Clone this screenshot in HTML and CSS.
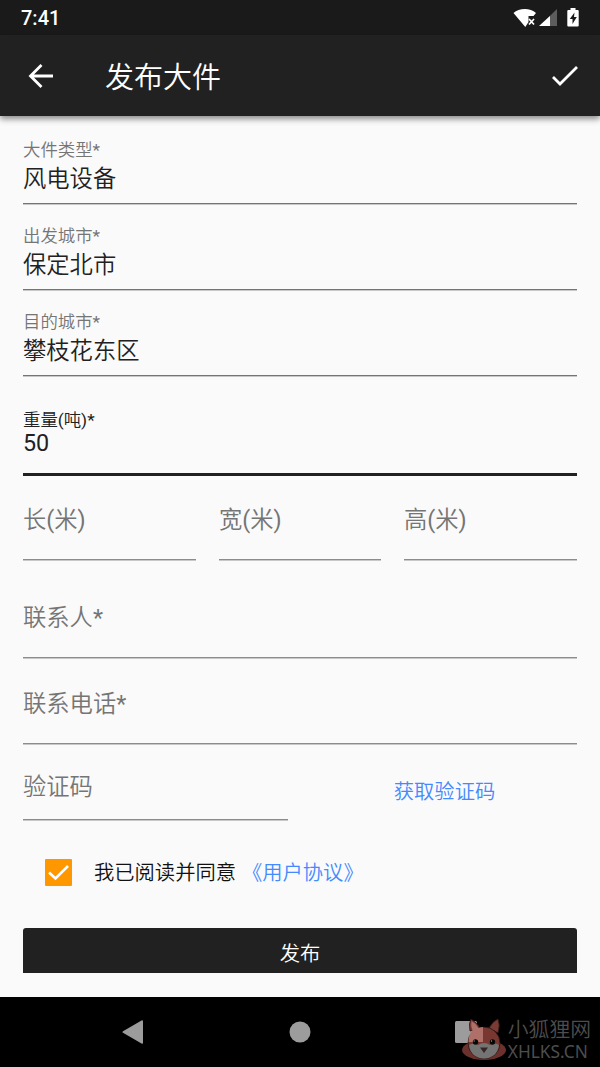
FILE: index.html
```html
<!DOCTYPE html>
<html lang="zh-CN">
<head>
  <meta charset="UTF-8">
  <meta name="viewport" content="width=device-width, initial-scale=1.0">
  <title>发布大件</title>
  <link rel="stylesheet" href="styles.css">
</head>
<body>
  <div class="status-bar">
    <span class="time">7:41</span>
    <svg class="status-icons" width="68" height="22" viewBox="0 0 68 22">
      <!-- wifi -->
      <path fill="#fff" d="M1.500 6C7 .8 18.500 .8 24 6L21.500 9H16.500v6l-3.200 5z"/>
      <path stroke="#fff" stroke-width="1.700" d="M17 12l5 5.500M22 12l-5 5.500"/>
      <!-- signal -->
      <path fill="#5c5c5c" d="M45 2v17H27.500z"/>
      <path fill="#fff" d="M38 9v10H27z"/>
      <!-- battery -->
      <path fill="#fff" d="M58.500 1h5v2h2.200q1 0 1 1v14.500q0 1-1 1h-9.400q-1 0-1-1V4q0-1 1-1h2.200z"/>
      <path fill="#1a1a1a" d="M62.500 5.500L57.800 12H60.500v5l4.300-7H62z"/>
    </svg>
  </div>

  <header class="app-bar">
    <svg class="back" width="26" height="26" viewBox="0 0 26 26">
      <path d="M25 13H2.500M13.500 2L2.500 13l11 11"/>
    </svg>
    <h1>发布大件</h1>
    <svg class="done" width="28" height="22" viewBox="0 0 28 22">
      <path d="M2 12l7 7L26 2"/>
    </svg>
  </header>

  <main class="form">
    <div class="field">
      <label>大件类型*</label>
      <div class="value">风电设备</div>
    </div>
    <div class="field">
      <label>出发城市*</label>
      <div class="value">保定北市</div>
    </div>
    <div class="field">
      <label>目的城市*</label>
      <div class="value">攀枝花东区</div>
    </div>
    <div class="field focused">
      <label>重量(吨)*</label>
      <div class="value">50</div>
    </div>
    <div class="size-row">
      <div class="field empty">长(米)</div>
      <div class="field empty">宽(米)</div>
      <div class="field empty">高(米)</div>
    </div>
    <div class="field empty contact">联系人*</div>
    <div class="field empty phone">联系电话*</div>
    <div class="code-row">
      <div class="field empty code">验证码</div>
      <a class="get-code">获取验证码</a>
    </div>
    <div class="agreement">
      <span class="checkbox">
        <svg width="27" height="27" viewBox="0 0 27 27">
          <path d="M4 13.500l6.500 6L23 7"/>
        </svg>
      </span>
      <span class="agree-text">我已阅读并同意</span>
      <a class="agree-link">《用户协议》</a>
    </div>
    <button class="submit">发布</button>
  </main>

  <nav class="nav-bar">
    <svg width="22" height="24" viewBox="0 0 22 24"><path fill="#9c9c9c" d="M1 11.200L19.500.500q1.500-.8 1.500 1v21q0 1.800-1.500 1L1 12.800q-1.200-.8 0-1.600z"/></svg>
    <svg width="22" height="22" viewBox="0 0 22 22"><circle cx="11" cy="11" r="10.500" fill="#9c9c9c"/></svg>
    <svg width="22" height="22" viewBox="0 0 22 22"><rect width="22" height="22" rx="1.500" fill="#9c9c9c"/></svg>

    <div class="watermark">
      <svg width="46" height="44" viewBox="0 0 46 44">
        <ellipse cx="23" cy="32" rx="22" ry="10" fill="#6b322d"/>
        <g stroke="#2b1513" stroke-width=".8">
          <path fill="#7b3b35" d="M9 13Q7.500 5 10 1q6 3.500 9 9zM28 10q4-7 9-9 2.500 6 0 14z"/>
          <circle cx="23" cy="25" r="16" fill="#783831"/>
        </g>
        <!-- lighter where the recents button shows through -->
        <path fill="#b0706a" d="M10.500 3q5 3 7 7 2.500-.8 4.500-1v15H7.500q0-8 4-11.500-2-4.500-1-9.500z"/>
        <path fill="#747474" d="M8 27q5-3 9 0 6-4 12 0 5-3 9 0-2 13-15 13.500Q10 40 8 27z"/>
        <g fill="#080808">
          <circle cx="14.500" cy="24" r="2.700"/>
          <circle cx="31.500" cy="24" r="2.700"/>
          <path fill="#342623" d="M19 29.500h8l-4 5.500z"/>
        </g>
        <path fill="#bbb" d="M12.700 22.500h1v1h-1zM30 22.500h1v1h-1z"/>
      </svg>
      <div class="watermark-text">
        <span class="site-name">小狐狸网</span>
        <span class="site-url">XHLKS.CN</span>
      </div>
    </div>
  </nav>
</body>
</html>
```

FILE: styles.css
```css
* {
  box-sizing: border-box;
}
body {
  margin: 0;
  height: 1067px;
  display: flex;
  flex-direction: column;
  overflow: hidden;
  background-color: #fafafa;
  color: #212121;
  font-family: Roboto, "Noto Sans CJK SC DemiLight", "Noto Sans CJK SC", sans-serif;
}
svg {
  display: block;
  flex: none;
}
.status-bar {
  height: 35px;
  flex: none;
  padding: 0 20px 0 21px;
  display: flex;
  align-items: center;
  justify-content: space-between;
  background-color: #1a1a1a;
  color: #fff;
}
.time {
  font-size: 20px;
  font-weight: 500;
  line-height: 36px;
}
.app-bar {
  height: 81px;
  flex: none;
  padding: 0 21px 0 28px;
  display: flex;
  align-items: center;
  background-color: #212121;
  color: #fff;
  box-shadow: 0 3px 6px rgba(0, 0, 0, 0.45);
}
.app-bar h1 {
  margin: 0 auto 0 51px;
  padding-top: 5px;
  font-size: 29px;
  font-weight: 350;
  line-height: 40px;
}
.back path,
.done path {
  fill: none;
  stroke: #fff;
  stroke-width: 2.8;
}
.form {
  flex: 1;
  min-height: 0;
  padding: 13px 23px 0;
}
.field {
  height: 75px;
  margin-bottom: 11px;
  padding-top: 10px;
  border-bottom: 1px solid #757575;
  box-shadow: 0 1px rgba(0, 0, 0, 0.2);
}
.field label {
  display: block;
  font-size: 17.4px;
  line-height: 22px;
  color: #757575;
}
.value {
  font-size: 23.3px;
  line-height: 36px;
}
.focused {
  height: 76px;
  margin: 24px 0 9px;
  padding-top: 7px;
  border-bottom: 3px solid #212121;
  box-shadow: none;
}
.focused label {
  padding-top: 2px;
  color: #212121;
}
.focused .value {
  line-height: 24px;
}
.empty {
  font-size: 23.3px;
  line-height: 34px;
  color: #757575;
  border-bottom-color: #8c8c8c;
  padding-top: 18px;
}
.size-row {
  display: grid;
  grid-template-columns: 173px 1fr 173px;
  gap: 23px;
}
.contact {
  margin-top: 12px;
}
.phone {
  margin-bottom: 8px;
}
.code-row {
  display: flex;
  justify-content: space-between;
}
.code {
  width: 265px;
  height: 68px;
  margin-bottom: 0;
}
.get-code {
  width: 265px;
  padding-top: 25px;
  text-align: center;
  font-size: 20.3px;
  line-height: 30px;
  color: #448aff;
}
.agreement {
  height: 27px;
  margin: 39px 0 42px;
  padding-left: 22px;
  display: flex;
  align-items: center;
  font-size: 20.3px;
  line-height: 30px;
  color: #111;
}
.checkbox {
  margin-right: 22px;
  border-radius: 1px;
  background-color: #ff9800;
}
.checkbox path {
  fill: none;
  stroke: #fff;
  stroke-width: 2.6;
}
.agree-link {
  margin-left: 6px;
  color: #448aff;
}
.submit {
  width: 100%;
  height: 45px;
  padding: 8px 0 0;
  display: block;
  border: none;
  border-radius: 3px 3px 0 0;
  background-color: #212121;
  color: #fff;
  font: inherit;
  font-size: 20.3px;
  line-height: 37px;
}
.nav-bar {
  position: relative;
  height: 70px;
  flex: none;
  padding: 0 123px 0 122px;
  display: flex;
  align-items: center;
  justify-content: space-between;
  background-color: #000;
}
.watermark {
  position: absolute;
  right: 9px;
  top: 21px;
  display: flex;
  gap: 1px;
  color: #4d4d4d;
}
.watermark-text {
  display: flex;
  flex-direction: column;
}
.site-name {
  font-size: 20.8px;
  line-height: 25px;
}
.site-url {
  font-family: "Noto Sans", sans-serif;
  font-size: 17.3px;
  line-height: 18px;
}
```
